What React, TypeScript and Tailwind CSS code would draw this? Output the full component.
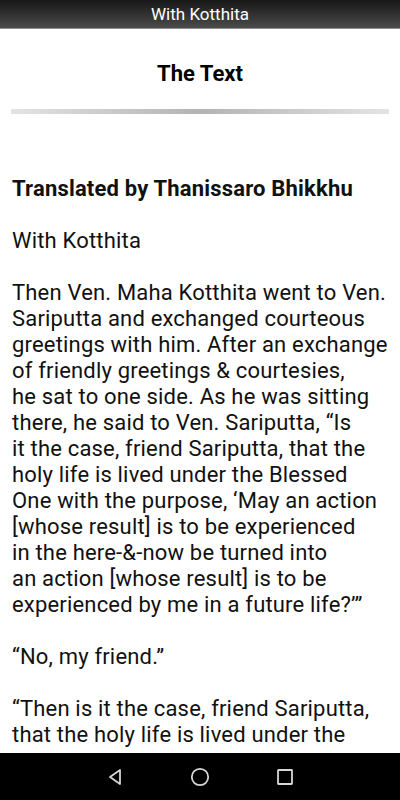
const body = [
  [
    "Then Ven. Maha Kotthita went to Ven.",
    "Sariputta and exchanged courteous",
    "greetings with him. After an exchange",
    "of friendly greetings & courtesies,",
    "he sat to one side. As he was sitting",
    "there, he said to Ven. Sariputta, \u201cIs",
    "it the case, friend Sariputta, that the",
    "holy life is lived under the Blessed",
    "One with the purpose, \u2018May an action",
    "[whose result] is to be experienced",
    "in the here-&-now be turned into",
    "an action [whose result] is to be",
    "experienced by me in a future life?\u2019\u201d",
  ],
  ["\u201cNo, my friend.\u201d"],
  [
    "\u201cThen is it the case, friend Sariputta,",
    "that the holy life is lived under the",
  ],
];

const App = () => {
  return (
    <div className="w-[400px] h-[800px] flex flex-col bg-white overflow-hidden font-['Roboto',sans-serif]">
      {/* Title bar */}
      <div className="h-[29px] shrink-0 flex items-center justify-center bg-gradient-to-b from-[#181818] to-[#4b4b4b] border-b border-[#8c8c8c]">
        <span className="text-white text-[17px] leading-none">With Kotthita</span>
      </div>

      {/* Content */}
      <div className="flex-1 overflow-hidden">
        <h1 className="mt-[31px] text-center text-[22px] leading-[28px] font-bold text-black">The Text</h1>
        <div className="mx-[11px] mt-[21px] h-[5px] bg-gradient-to-r from-[#e4e4e4] via-[#b3b3b3] to-[#e4e4e4]" />

        <div className="mt-[62px] px-3 text-[22px] leading-[26px] tracking-[0.18px] text-[#111]">
          <p className="font-bold">Translated by Thanissaro Bhikkhu</p>
          <p className="mt-[26px]">With Kotthita</p>
          {body.map((para, i) => (
            <p key={i} className="mt-[26px]">
              {para.map((line, j) => (
                <span key={j} className="block whitespace-nowrap">{line}</span>
              ))}
            </p>
          ))}
        </div>
      </div>

      {/* Android nav bar */}
      <div className="h-[47px] shrink-0 bg-black flex items-center justify-center gap-[66px]">
        <svg width="18" height="18" viewBox="0 0 18 18" fill="none" stroke="#d6d6d6" strokeWidth="1.8" strokeLinejoin="round">
          <path d="M14 2 L4 9 L14 16 Z" />
        </svg>
        <svg width="20" height="20" viewBox="0 0 20 20" fill="none" stroke="#d6d6d6" strokeWidth="1.8">
          <circle cx="10" cy="10" r="8.2" />
        </svg>
        <svg width="18" height="18" viewBox="0 0 18 18" fill="none" stroke="#d6d6d6" strokeWidth="1.8">
          <rect x="2" y="2" width="14" height="14" rx="0.5" />
        </svg>
      </div>
    </div>
  );
};

export default App;
